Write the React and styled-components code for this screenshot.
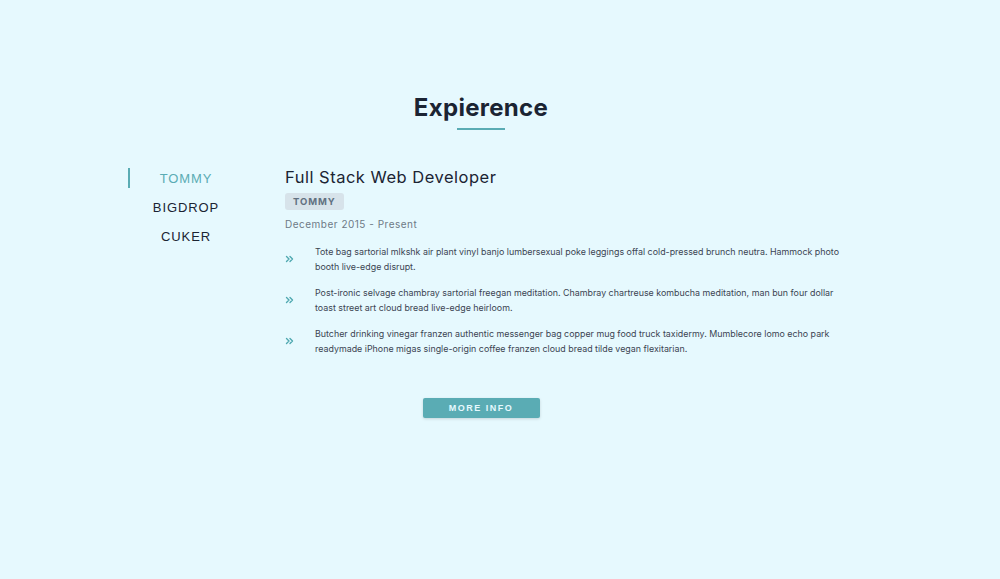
import React, { useState } from 'react';
import styled, { createGlobalStyle, css } from 'styled-components';

const GlobalStyle = createGlobalStyle`
  html, body {
    margin: 0;
    padding: 0;
    background: #e6f9fe;
  }
  body {
    font-family: Inter, "Noto Sans", sans-serif;
    color: #1b2433;
  }
`;

const jobs = [
  {
    company: 'TOMMY',
    title: 'Full Stack Web Developer',
    dates: 'December 2015 - Present',
    duties: [
      'Tote bag sartorial mlkshk air plant vinyl banjo lumbersexual poke leggings offal cold-pressed brunch neutra. Hammock photo booth live-edge disrupt.',
      'Post-ironic selvage chambray sartorial freegan meditation. Chambray chartreuse kombucha meditation, man bun four dollar toast street art cloud bread live-edge heirloom.',
      'Butcher drinking vinegar franzen authentic messenger bag copper mug food truck taxidermy. Mumblecore lomo echo park readymade iPhone migas single-origin coffee franzen cloud bread tilde vegan flexitarian.',
    ],
  },
  { company: 'BIGDROP', title: 'Front-End Engineer', dates: 'May 2015 - December 2015', duties: [] },
  { company: 'CUKER', title: 'Engineering Intern', dates: 'May 2014 - September 2015', duties: [] },
];

const App = () => {
  const [active, setActive] = useState(0);
  const job = jobs[active];

  return (
    <>
      <GlobalStyle />
      <Section>
        <TitleBox>
          <Title>Expierence</Title>
          <Underline />
        </TitleBox>
        <JobsCenter>
          <BtnContainer>
            {jobs.map((item, idx) => (
              <JobBtn key={item.company} active={idx === active} onClick={() => setActive(idx)}>
                {item.company}
              </JobBtn>
            ))}
          </BtnContainer>
          <JobInfo>
            <JobTitle>{job.title}</JobTitle>
            <Company>{job.company}</Company>
            <JobDate>{job.dates}</JobDate>
            {job.duties.map((duty, idx) => (
              <JobDesc key={idx}>
                <Chevron viewBox="0 0 10 10">
                  <path d="M1.5 2.5 L4 5 L1.5 7.5 M5 2.5 L7.5 5 L5 7.5" />
                </Chevron>
                <DutyText>{duty}</DutyText>
              </JobDesc>
            ))}
          </JobInfo>
        </JobsCenter>
        <MoreBtn>MORE INFO</MoreBtn>
      </Section>
    </>
  );
};

export default App;

const Section = styled.section`
  width: 720px;
  margin-left: 121px;
  padding-top: 92px;
  display: flex;
  flex-direction: column;
  align-items: center;
  min-height: 487px;
`;

const TitleBox = styled.div`
  display: flex;
  flex-direction: column;
  align-items: center;
  margin-bottom: 38px;
`;

const Title = styled.h2`
  margin: 0;
  font-size: 24px;
  line-height: 32px;
  font-weight: 700;
  letter-spacing: 0.3px;
  color: #1b2433;
`;

const Underline = styled.div`
  width: 48px;
  height: 2px;
  margin-top: 4px;
  background: #5aacb4;
`;

const JobsCenter = styled.div`
  display: grid;
  grid-template-columns: 164px 1fr;
  width: 100%;
  align-items: start;
`;

const BtnContainer = styled.div`
  display: flex;
  flex-direction: column;
  padding-left: 7px;
`;

const JobBtn = styled.button`
  width: 114px;
  height: 20px;
  margin-bottom: 9px;
  border: none;
  border-left: 2px solid transparent;
  background: transparent;
  font-family: "Liberation Sans", Arial, sans-serif;
  font-size: 13px;
  letter-spacing: 0.9px;
  color: #1b2433;
  text-align: center;
  padding: 0;
  cursor: pointer;
  ${props =>
    props.active &&
    css`
      color: #5aacb4;
      border-left-color: #5aacb4;
    `}
`;

const JobInfo = styled.article`
  display: flex;
  flex-direction: column;
  align-items: flex-start;
`;

const JobTitle = styled.h3`
  margin: 0;
  font-size: 16.5px;
  line-height: 18px;
  font-weight: 400;
  letter-spacing: 0.5px;
  color: #1b2433;
`;

const Company = styled.span`
  margin-top: 7px;
  padding: 3px 8px;
  background: #d7e3ea;
  border-radius: 3px;
  font-size: 9.5px;
  line-height: 11px;
  font-weight: 700;
  letter-spacing: 0.9px;
  color: #617181;
`;

const JobDate = styled.p`
  margin: 8px 0 13px;
  font-size: 10px;
  line-height: 13px;
  letter-spacing: 0.5px;
  color: #6e7a86;
`;

const JobDesc = styled.div`
  display: grid;
  grid-template-columns: 30px 1fr;
  align-items: center;
  margin-bottom: 11px;
`;

const Chevron = styled.svg`
  width: 10px;
  height: 10px;
  fill: none;
  stroke: #4fa8b0;
  stroke-width: 1.4;
  stroke-linecap: round;
  stroke-linejoin: round;
`;

const DutyText = styled.p`
  margin: 0;
  font-size: 8.9px;
  line-height: 15px;
  color: #3b4452;
`;

const MoreBtn = styled.button`
  margin-top: 31px;
  width: 117px;
  height: 20px;
  border: none;
  border-radius: 2px;
  background: #5aacb4;
  color: #e6f9fe;
  font-family: "Liberation Sans", Arial, sans-serif;
  font-size: 9px;
  font-weight: 700;
  letter-spacing: 1.5px;
  box-shadow: 0 1px 3px rgba(0, 0, 0, 0.15);
  cursor: pointer;
`;
